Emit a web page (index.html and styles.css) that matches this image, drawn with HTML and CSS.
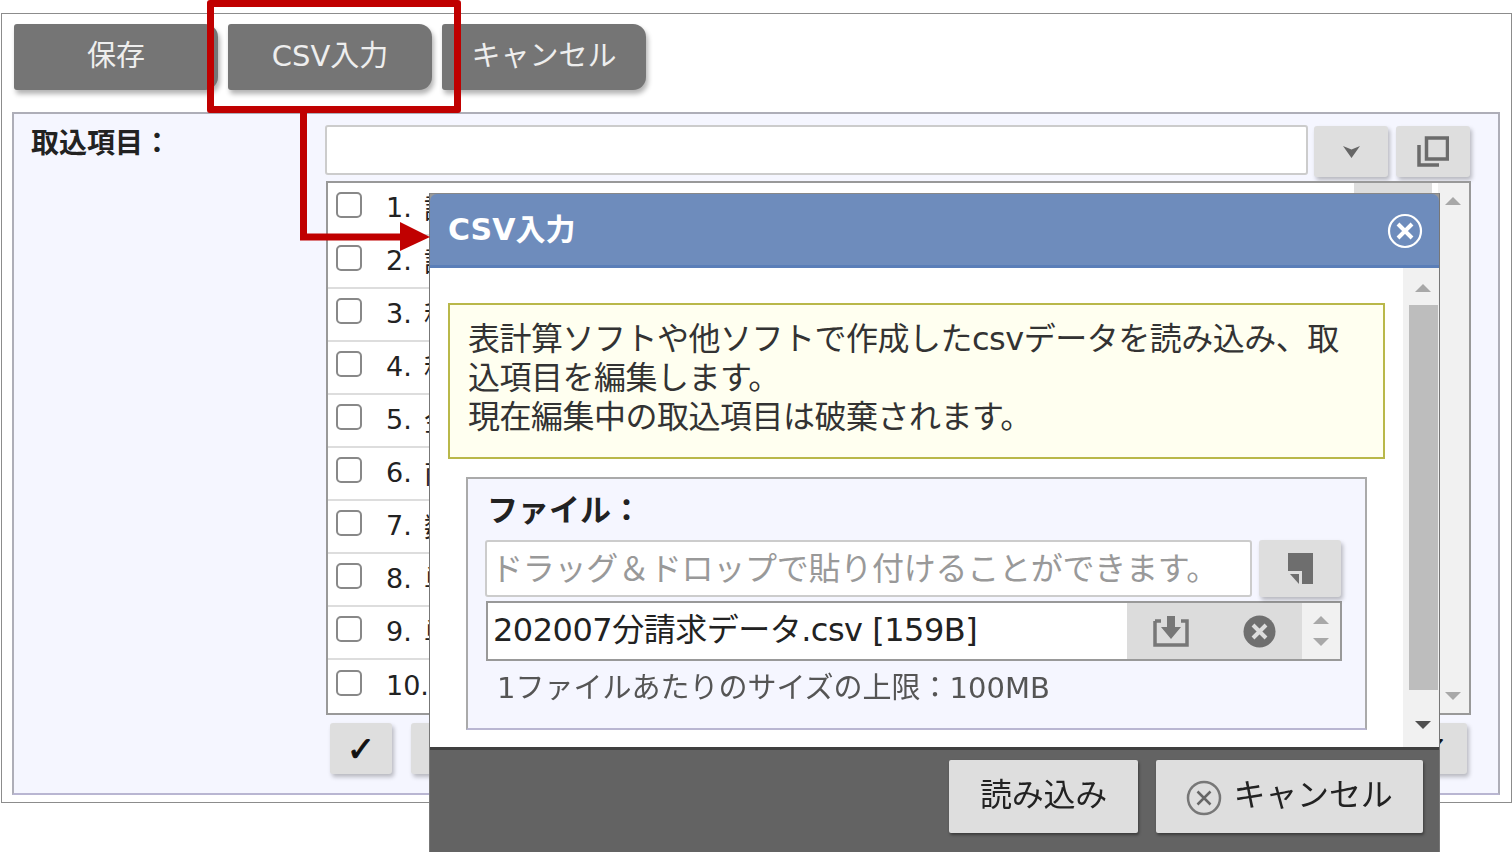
FILE: index.html
```html
<!DOCTYPE html>
<html lang="ja">
<head>
<meta charset="utf-8">
<title>CSV入力</title>
<link rel="stylesheet" href="styles.css">
</head>
<body>
<div class="stage">
  <main class="window">
    <div class="toolbar">
      <button class="tool-btn">保存</button>
      <button class="tool-btn">CSV入力</button>
      <button class="tool-btn">キャンセル</button>
    </div>
    <section class="panel">
      <div class="panel-label">取込項目：</div>
      <div class="panel-main">
        <div class="select-row">
          <div class="select-input"></div>
          <button class="grey-btn sq"><svg width="17" height="12" viewBox="0 0 17 12"><path d="M0 0l8.500 3.500L17 0l-8.500 12z" fill="#666"/></svg></button>
          <button class="grey-btn sq"><svg width="32" height="31" viewBox="0 0 32 31"><path d="M9.500 2h21v21h-21z" fill="none" stroke="#6b6b6b" stroke-width="3.500"/><path d="M2 9v20h20" fill="none" stroke="#6b6b6b" stroke-width="3.500"/></svg></button>
        </div>
        <div class="list">
          <ul class="rows">
            <li class="row"><span class="check"></span><span class="num">1.</span><span class="name">請求書番号</span><span class="row-tool"></span></li>
            <li class="row"><span class="check"></span><span class="num">2.</span><span class="name">請求日</span></li>
            <li class="row"><span class="check"></span><span class="num">3.</span><span class="name">税抜金額</span></li>
            <li class="row"><span class="check"></span><span class="num">4.</span><span class="name">税額</span></li>
            <li class="row"><span class="check"></span><span class="num">5.</span><span class="name">金額</span></li>
            <li class="row"><span class="check"></span><span class="num">6.</span><span class="name">商品名</span></li>
            <li class="row"><span class="check"></span><span class="num">7.</span><span class="name">数量</span></li>
            <li class="row"><span class="check"></span><span class="num">8.</span><span class="name">単位</span></li>
            <li class="row"><span class="check"></span><span class="num">9.</span><span class="name">単価</span></li>
            <li class="row"><span class="check"></span><span class="num">10.</span><span class="name">備考</span></li>
          </ul>
          <div class="list-scroll">
            <span class="tri up pale"></span>
            <span class="tri down pale"></span>
          </div>
        </div>
        <div class="list-actions">
          <button class="grey-btn act">✓</button>
          <button class="grey-btn act wide"></button>
          <span class="spacer"></span>
          <button class="grey-btn act last">✓</button>
        </div>
      </div>
    </section>
  </main>

  <div class="dialog">
    <header class="dialog-head">
      <h1 class="dialog-title">CSV入力</h1>
      <svg class="close-icon" width="36" height="36" viewBox="0 0 36 36"><circle cx="18" cy="18" r="16" fill="none" stroke="#fff" stroke-width="2.200"/><path d="M11 11l14 14M25 11L11 25" stroke="#fff" stroke-width="4"/></svg>
    </header>
    <div class="dialog-body">
      <div class="dialog-content">
        <p class="notice">表計算ソフトや他ソフトで作成したcsvデータを読み込み、取<br>込項目を編集します。<br>現在編集中の取込項目は破棄されます。</p>
        <section class="file-panel">
          <div class="file-label">ファイル：</div>
          <div class="drop-row">
            <div class="drop-input">ドラッグ＆ドロップで貼り付けることができます。</div>
            <button class="grey-btn paste"><svg width="25" height="31" viewBox="0 0 25 31"><path d="M0 0h25v31H14V18H0z" fill="#6e6e6e"/><path d="M2 21h9v10z" fill="#6e6e6e"/></svg></button>
          </div>
          <div class="file-row">
            <span class="file-name">202007分請求データ.csv [159B]</span>
            <span class="file-tools">
              <svg width="36" height="32" viewBox="0 0 36 32"><path d="M2 6v24h32V6h-6M8 6H2" fill="none" stroke="#777" stroke-width="3.500"/><path d="M14 1h8v11h6L18 24 8 12h6z" fill="#777"/></svg>
              <svg width="33" height="33" viewBox="0 0 33 33"><circle cx="16.500" cy="16.500" r="16" fill="#6f6f6f"/><path d="M10 10l13 13M23 10L10 23" stroke="#ddd" stroke-width="4"/></svg>
            </span>
            <span class="file-spin"><span class="tri up pale"></span><span class="tri down pale"></span></span>
          </div>
          <div class="limit">1ファイルあたりのサイズの上限：100MB</div>
        </section>
      </div>
      <div class="dialog-scroll">
        <span class="tri up pale"></span>
        <span class="thumb"></span>
        <span class="tri down dark"></span>
      </div>
    </div>
    <footer class="dialog-foot">
      <button class="foot-btn load">読み込み</button>
      <button class="foot-btn cancel"><svg width="36" height="36" viewBox="0 0 36 36"><circle cx="18" cy="18" r="16" fill="none" stroke="#777" stroke-width="2.500"/><path d="M11.500 11.500l13 13M24.500 11.500l-13 13" stroke="#666" stroke-width="2.500"/></svg>キャンセル</button>
    </footer>
  </div>

  <div class="callout-box"></div>
  <svg class="callout-arrow" width="140" height="140" viewBox="0 0 140 140"><path d="M3.500 0V124H105" fill="none" stroke="#c00000" stroke-width="7"/><path d="M100 109l30 15-30 14z" fill="#c00000"/></svg>
</div>
</body>
</html>
```

FILE: styles.css
```css
* { box-sizing: border-box; }
html, body { margin: 0; padding: 0; background: #fff; }
body { font-family: "DejaVu Sans", "Noto Sans CJK JP", sans-serif; color: #222; overflow: hidden; }
button { font-family: inherit; border: 0; padding: 0; }
ul, h1, p { margin: 0; padding: 0; }
li { list-style: none; }

.stage { position: relative; width: 1512px; height: 853px; padding-top: 13px; overflow: hidden; filter: blur(0.4px); }

.window { width: 1511px; height: 790px; margin-left: 1px; border: 1px solid #8c8c8c; background: #fff; padding: 10px 10px 7px 10px; display: flex; flex-direction: column; }

.toolbar { display: flex; gap: 10px; height: 66px; margin-left: 2px; margin-bottom: 22px; }
.tool-btn { width: 204px; height: 66px; padding-bottom: 8px; background: #757575; color: #eee; font-size: 29px; border-radius: 3px 13px 13px 3px; box-shadow: 2px 4px 5px rgba(0, 0, 0, .3); }

.panel { flex: 1; width: 1488px; display: flex; border: 2px solid #aeaeb8; border-bottom-color: #b9b6d2; background: #f5f6ff; }
.panel-label { width: 311px; flex: none; padding: 10px 0 0 17px; font-size: 28px; font-weight: 700; line-height: 40px; color: #222; }
.panel-main { flex: 1; padding-top: 11px; display: flex; flex-direction: column; }

.select-row { display: flex; height: 56px; }
.select-input { width: 983px; height: 50px; background: #fff; border: 2px solid #ccc; border-radius: 3px; margin-right: 6px; }
.grey-btn { background: #dedede; border-radius: 3px; box-shadow: 2px 3px 4px rgba(0, 0, 0, .25); display: flex; align-items: center; justify-content: center; }
.sq { width: 74px; height: 51px; margin-right: 8px; margin-top: 1px; }

.list { width: 1145px; height: 534px; margin-left: 1px; border: 2px solid #999; background: #fff; display: flex; }
.rows { flex: 1; min-width: 0; }
.row { height: 53px; display: flex; align-items: center; padding: 0 0 8px 8px; border-bottom: 2px solid #ddd; font-size: 27px; position: relative; }
.row:last-child { border-bottom: 0; }
.check { width: 26px; height: 26px; border: 2px solid #888; border-radius: 5px; background: #fff; margin-right: 24px; }
.num { color: #222; min-width: 38px; flex: none; padding-top: 6px; }
.name { color: #222; padding-top: 6px; }
.row-tool { position: absolute; right: 6px; top: 0; width: 78px; height: 12px; background: #ddd; }
.list-scroll { width: 31px; flex: none; background: #f1f1f1; display: flex; flex-direction: column; justify-content: space-between; align-items: center; padding: 14px 2px 13px 0; }

.tri { width: 0; height: 0; border-left: 8px solid transparent; border-right: 8px solid transparent; display: block; }
.tri.up.pale { border-bottom: 8px solid #a8a8a8; }
.tri.down.pale { border-top: 8px solid #a8a8a8; }
.tri.down.dark { border-top: 8px solid #505050; }

.list-actions { display: flex; margin-top: 8px; padding-left: 5px; width: 1142px; }
.act { width: 62px; height: 51px; font-size: 34px; font-weight: 700; color: #111; margin-right: 19px; -webkit-text-stroke: 1px #111; }
.wide { width: 70px; }
.spacer { flex: 1; }
.last { width: 66px; margin-right: 0; }

.dialog { position: absolute; left: 429px; top: 193px; width: 1011px; height: 659px; background: #999; border-left: 1px solid #777; border-right: 1px solid #777; border-top: 1px solid #888; display: flex; flex-direction: column; }
.dialog-head { height: 74px; flex: none; background: #6e8cbc; border-bottom: 3px solid #5a7eb8; border-radius: 7px 7px 0 0; display: flex; align-items: center; justify-content: space-between; padding: 0 16px 0 18px; }
.dialog-title { font-size: 30px; font-weight: 700; color: #fff; line-height: 1; }
.close-icon { margin-top: 3px; }

.dialog-body { height: 479px; flex: none; display: flex; background: #fff; }
.dialog-content { flex: 1; min-width: 0; padding: 35px 0 0 18px; }
.notice { width: 937px; height: 156px; border: 2px solid #b9b84a; background: #fffff0; padding: 15px 0 0 18px; font-size: 32px; line-height: 39px; color: #333; letter-spacing: -0.5px; }

.file-panel { width: 901px; height: 253px; margin: 18px 0 0 18px; border: 2px solid #aaa; border-bottom-color: #b9b6d2; background: #f5f6ff; padding: 11px 0 0 17px; }
.file-label { font-size: 31px; font-weight: 700; line-height: 40px; color: #222; margin: 0 0 10px 2px; height: 40px; }
.drop-row { display: flex; height: 58px; }
.drop-input { width: 767px; height: 57px; background: #fff; border: 2px solid #ccc; border-radius: 3px; margin-right: 7px; font-size: 32px; line-height: 55px; color: #999; padding-left: 4px; white-space: nowrap; overflow: hidden; letter-spacing: -0.25px; }
.paste { width: 82px; height: 57px; }
.file-row { display: flex; height: 60px; width: 856px; margin: 3px 0 0 1px; border: 2px solid #999; background: #fff; }
.file-name { flex: 1; font-size: 32px; line-height: 54px; padding-left: 5px; color: #222; white-space: nowrap; letter-spacing: -0.5px; }
.file-tools { width: 175px; flex: none; background: #dcdcdc; display: flex; align-items: center; justify-content: space-between; padding: 0 26px 0 26px; }
.file-spin { width: 38px; flex: none; background: #f1f1f1; display: flex; flex-direction: column; align-items: center; justify-content: center; gap: 14px; }
.limit { font-size: 29px; line-height: 54px; color: #555; margin-left: 12px; white-space: nowrap; }

.dialog-scroll { width: 36px; flex: none; background: #f1f1f1; display: flex; flex-direction: column; align-items: center; padding: 16px 0 0 4px; }
.dialog-scroll .thumb { width: 29px; height: 385px; background: #bdbdbd; margin: 13px 0 31px; flex: none; }

.dialog-foot { flex: 1; background: #636363; border-top: 3px solid #3f3f3f; display: flex; justify-content: flex-end; padding: 10px 16px 0 0; gap: 18px; }
.foot-btn { height: 73px; padding-bottom: 9px; background: #dedede; color: #222; font-size: 32px; letter-spacing: -0.2px; border-radius: 2px; box-shadow: 1px 2px 3px rgba(0, 0, 0, .4); display: flex; align-items: center; justify-content: center; }
.load { width: 189px; }
.cancel { width: 267px; gap: 11px; }
.cancel svg { margin-top: 11px; }

.callout-box { position: absolute; left: 207px; top: 0; width: 254px; height: 113px; border: 7px solid #c00000; border-radius: 3px; }
.callout-arrow { position: absolute; left: 300px; top: 113px; }
```
